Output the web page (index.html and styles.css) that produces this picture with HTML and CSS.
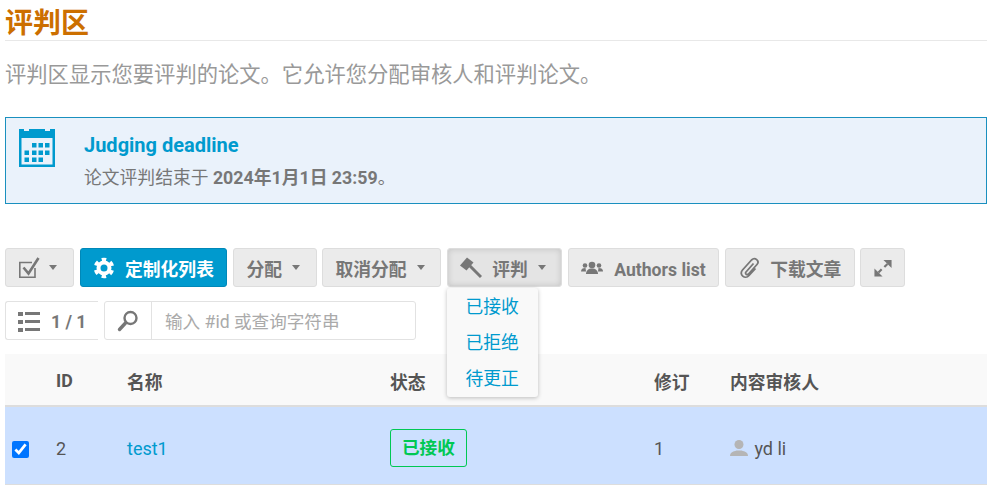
FILE: index.html
```html
<!DOCTYPE html>
<html lang="zh">
<head>
    <meta charset="UTF-8">
    <title>评判区</title>
    <link rel="stylesheet" href="styles.css">
</head>
<body>
    <h1 class="page-title">评判区</h1>
    <p class="page-desc">评判区显示您要评判的论文。它允许您分配审核人和评判论文。</p>

    <div class="notice">
        <svg class="notice-icon" viewBox="0 0 36 38" width="36" height="38">
            <path fill="#009ace" d="M0 0h5v2h5V0h16v2h5V0h5v38H0z"/>
            <rect fill="#eaf2fb" x="2.500" y="9" width="31" height="26.500"/>
            <g fill="#009ace">
                <rect x="13" y="14" width="4.500" height="4.500"/><rect x="19.500" y="14" width="4.500" height="4.500"/><rect x="26" y="14" width="4.500" height="4.500"/>
                <rect x="5.500" y="21.500" width="4.500" height="4.500"/><rect x="13" y="21.500" width="4.500" height="4.500"/><rect x="19.500" y="21.500" width="4.500" height="4.500"/><rect x="26" y="21.500" width="4.500" height="4.500"/>
                <rect x="5.500" y="28.500" width="4.500" height="4.500"/><rect x="13" y="28.500" width="4.500" height="4.500"/><rect x="19.500" y="28.500" width="4.500" height="4.500"/>
            </g>
        </svg>
        <div class="notice-text">
            <div class="notice-title">Judging deadline</div>
            <div class="notice-body">论文评判结束于 <b>2024年1月1日 23:59</b>。</div>
        </div>
    </div>

    <div class="toolbar">
        <button class="btn btn-check">
            <svg viewBox="0 0 22 22" width="22" height="22"><path fill="none" stroke="#777" stroke-width="1.600" d="M16 11v9.200H.8V5.500H13"/><path fill="none" stroke="#777" stroke-width="2.600" d="M4.500 10.500l5 6 10-15.500"/></svg>
            <span class="caret"></span>
        </button>
        <button class="btn btn-primary">
            <svg viewBox="-11 -11 22 22" width="22" height="22">
                <circle r="5.500" fill="none" stroke="#fff" stroke-width="4"/>
                <circle r="8.500" fill="none" stroke="#fff" stroke-width="3.500" stroke-dasharray="4.400 4.500" transform="rotate(-105)"/>
            </svg>
            定制化列表
        </button>
        <button class="btn">分配 <span class="caret"></span></button>
        <button class="btn">取消分配 <span class="caret"></span></button>
        <div class="btn-wrap">
            <button class="btn btn-open">
                <svg viewBox="0 0 22 22" width="22" height="22"><path fill="#777" d="M0 8.500L7 .5l6.500 5-7 8z"/><path stroke="#777" stroke-width="3" d="M9.500 8.500l11.500 11.500"/></svg>
                评判 <span class="caret"></span>
            </button>
            <ul class="menu">
                <li>已接收</li>
                <li>已拒绝</li>
                <li>待更正</li>
            </ul>
        </div>
        <button class="btn">
            <svg viewBox="0 0 22 14" width="22" height="14"><g fill="#777"><circle cx="11" cy="4" r="3.300"/><path d="M5 13c0-3.500 2.500-5.500 6-5.500s6 2 6 5.500z"/><circle cx="4" cy="4.500" r="2.300"/><path d="M0 10.500c0-2.500 1.500-3.500 4.500-3.500l.5 3.500z"/><circle cx="18" cy="4.500" r="2.300"/><path d="M22 10.500c0-2.500-1.500-3.500-4.500-3.500l-.5 3.500z"/></g></svg>
            <span class="btn-label">Authors list</span>
        </button>
        <button class="btn">
            <svg viewBox="0 0 22 24" width="22" height="24"><path fill="none" stroke="#777" stroke-width="1.800" d="M15.500 7.500L8 16c-1.500 1.700 1 3.500 2.500 2L19 8.500c3-3.500-2-8-5.500-4.500L4.500 14c-4 4.500 2.500 10 6.500 5.500l6.500-7"/></svg>
            下载文章
        </button>
        <button class="btn btn-expand">
            <svg viewBox="0 0 20 20" width="20" height="20"><g fill="#777"><path d="M10.500 1h9v9z"/><path d="M.5 10.500v9h9z"/></g><path stroke="#777" stroke-width="2.400" d="M15 5.500l-3.500 3.500M5 15l3.500-3.500"/></svg>
        </button>
    </div>

    <div class="filter-row">
        <div class="pager">
            <svg viewBox="0 0 22 20" width="22" height="20"><path fill="#777" d="M0 0h5v4H0zM7 0h15v3H7zM0 8h5v4H0zM7 8h15v3H7zM0 16h5v4H0zM7 16h15v3H7z"/></svg>
            <span>1 / 1</span>
        </div>
        <div class="search">
            <span class="search-icon">
                <svg viewBox="0 0 22 22" width="22" height="22"><circle cx="13.500" cy="8" r="6" fill="none" stroke="#777" stroke-width="2.400"/><path stroke="#777" stroke-width="3.400" stroke-linecap="round" d="M8.500 13l-6 6.500"/></svg>
            </span>
            <span class="search-input">输入 #id 或查询字符串</span>
        </div>
    </div>

    <table class="list">
        <thead>
            <tr>
                <th class="col-check"></th>
                <th class="col-id">ID</th>
                <th class="col-name">名称</th>
                <th class="col-status">状态</th>
                <th class="col-rev">修订</th>
                <th>内容审核人</th>
            </tr>
        </thead>
        <tbody>
            <tr>
                <td><input type="checkbox" class="row-check" checked></td>
                <td>2</td>
                <td><a class="link">test1</a></td>
                <td><span class="tag">已接收</span></td>
                <td>1</td>
                <td>
                    <svg class="user-icon" viewBox="0 0 18 16" width="18" height="16"><circle cx="9" cy="4.500" r="4.500" fill="#b5b5b5"/><path fill="#b5b5b5" d="M0 16c0-3.500 3-4.500 6.500-5.500h5c3.500 1 6.500 2 6.500 5.500z"/></svg>
                    yd li
                </td>
            </tr>
        </tbody>
    </table>
</body>
</html>
```

FILE: styles.css
```css
* {
    box-sizing: border-box;
}
body {
    margin: 0;
    padding: 0 4px 0 5px;
    font-family: Roboto, "Noto Sans CJK SC", sans-serif;
    color: #555;
    overflow: hidden;
}
.page-title {
    margin: 0;
    height: 41px;
    padding-top: 9px;
    font-size: 28px;
    line-height: 30px;
    font-weight: 700;
    color: #cc6f00;
    border-bottom: 1px solid #e8e8e8;
}
.page-desc {
    margin: 0;
    padding-top: 20px;
    height: 76px;
    font-size: 21.300px;
    line-height: 28px;
    color: #999;
}
.notice {
    display: flex;
    height: 87px;
    padding: 11px 13px;
    background-color: #eaf2fb;
    border: 1px solid #1a90bf;
}
.notice-icon {
    flex: none;
}
.notice-text {
    margin-left: 29px;
    padding-top: 2px;
}
.notice-title {
    font-size: 20px;
    line-height: 28px;
    font-weight: 700;
    color: #009ace;
}
.notice-body {
    margin-top: 6px;
    font-size: 17.800px;
    line-height: 26px;
    color: #777;
}
.toolbar {
    display: flex;
    gap: 5.500px;
    margin-top: 44px;
    height: 39px;
}
.btn {
    display: flex;
    align-items: center;
    justify-content: center;
    gap: 10px;
    height: 39px;
    padding: 0 12.500px;
    font-family: inherit;
    font-size: 17.800px;
    font-weight: 700;
    color: #777;
    background-color: #ebebeb;
    border: 1px solid #ddd;
    border-radius: 3px;
}
.btn-label {
    margin-left: 1px;
    padding-top: 4px;
    font-size: 17.600px;
}
.btn-primary {
    color: #fff;
    background-color: #009ace;
    border-color: #0088b8;
}
.btn-check {
    justify-content: flex-start;
    gap: 8px;
    width: 69px;
}
.btn-expand {
    width: 45px;
}
.btn-open {
    box-shadow: inset 0 0 6px rgba(0, 0, 0, .15);
    background-color: #e4e4e4;
}
.caret {
    width: 0;
    height: 0;
    margin-right: 3px;
    border-left: 4.500px solid transparent;
    border-right: 4.500px solid transparent;
    border-top: 5px solid #777;
}
.btn-wrap {
    position: relative;
}
.menu {
    position: absolute;
    top: 40px;
    left: 0;
    width: 91px;
    margin: 0;
    padding: 1px 0 0;
    list-style: none;
    background-color: #f9f9f9;
    border-radius: 3px;
    box-shadow: 0 1px 4px rgba(0, 0, 0, .25);
    z-index: 2;
}
.menu li {
    height: 36px;
    font-size: 17.800px;
    line-height: 36px;
    text-align: center;
    color: #009ace;
}
.filter-row {
    display: flex;
    gap: 6px;
    margin-top: 14px;
    height: 39px;
}
.pager {
    display: flex;
    align-items: center;
    gap: 11px;
    width: 93px;
    padding-left: 12px;
    padding-top: 2px;
    font-size: 17.600px;
    font-weight: 700;
    color: #777;
    border: 1px solid #e2e2e2;
    border-right: none;
    border-radius: 3px 0 0 3px;
}
.search {
    display: flex;
    width: 312px;
    border: 1px solid #e2e2e2;
    border-radius: 3px;
}
.search-icon {
    display: flex;
    align-items: center;
    justify-content: center;
    width: 47px;
    border-right: 1px solid #e2e2e2;
}
.search-input {
    padding-left: 13px;
    font-size: 17.600px;
    line-height: 40px;
    color: #aaa;
}
.list {
    width: 100%;
    margin-top: 14px;
    border-collapse: collapse;
}
.list th {
    height: 52px;
    padding: 2px 0 0;
    font-size: 17.800px;
    font-weight: 700;
    text-align: left;
    color: #555;
    background-color: #f9f9f9;
    border-bottom: 2px solid #ddd;
}
.list td {
    height: 78px;
    padding: 6px 0 0;
    font-size: 18px;
    color: #555;
    background-color: #cce0ff;
    border-bottom: 1px solid #ddd;
}
.col-check {
    width: 51px;
}
.col-id {
    width: 71px;
}
.col-name {
    width: 263px;
}
.col-status {
    width: 264px;
}
.col-rev {
    width: 76px;
}
.row-check {
    display: block;
    width: 17px;
    height: 17px;
    margin: 3px 0 0 7px;
}
.link {
    color: #009ace;
}
.tag {
    display: inline-block;
    padding: 0 11px;
    height: 38px;
    font-size: 17.600px;
    font-weight: 700;
    line-height: 36px;
    color: #00c853;
    border: 1px solid #00c853;
    border-radius: 3px;
}
.user-icon {
    margin-right: 2px;
    vertical-align: -1px;
}
```
